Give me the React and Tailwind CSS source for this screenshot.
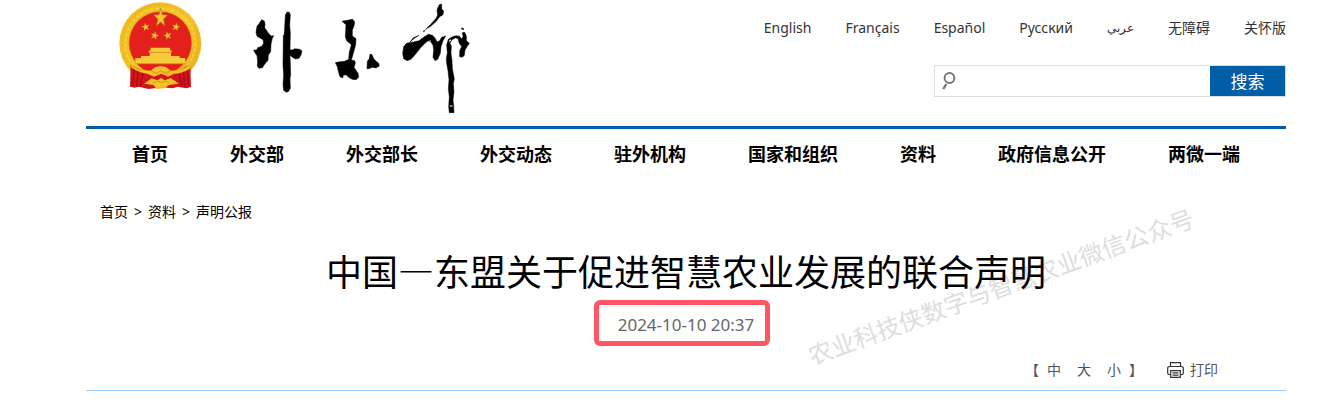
import React, { useState } from 'react';

const languages = ['English', 'Français', 'Español', 'Русский', 'عربي', '无障碍', '关怀版'];

const navItems = [
  '首页',
  '外交部',
  '外交部长',
  '外交动态',
  '驻外机构',
  '国家和组织',
  '资料',
  '政府信息公开',
  '两微一端',
];

const STAR = '0,-10 2.4,-3.2 9.5,-3.1 3.8,1.2 5.9,8.1 0,4 -5.9,8.1 -3.8,1.2 -9.5,-3.1 -2.4,-3.2';

function Emblem() {
  return (
    <svg viewBox="0 0 300 288" className="h-24 w-[100px] shrink-0" role="img" aria-label="国徽">
      <defs>
        <linearGradient id="gold" x1="0" y1="0" x2="1" y2="1">
          <stop offset="0" stopColor="#f0b81e" />
          <stop offset="0.5" stopColor="#f3c52c" />
          <stop offset="1" stopColor="#e9ad1c" />
        </linearGradient>
      </defs>
      {/* wheat ring */}
      <circle cx="151" cy="130" r="123" fill="url(#gold)" />
      <circle cx="151" cy="130" r="115" fill="none" stroke="#e6ac1e" strokeWidth="3" strokeDasharray="7 6" />
      <circle cx="151" cy="130" r="105" fill="none" stroke="#f8d64c" strokeWidth="4" strokeDasharray="9 7" />
      <circle cx="151" cy="129" r="95" fill="#c98a16" />
      <circle cx="151" cy="129" r="93" fill="#e3201b" />
      {/* stars */}
      <g fill="#f0c52e" stroke="#a8741a" strokeWidth="0.6">
        <polygon points={STAR} transform="translate(152 54) scale(2.2 3)" />
        <polygon points={STAR} transform="translate(107 81) rotate(-12) scale(1.3)" />
        <polygon points={STAR} transform="translate(198 81) rotate(12) scale(1.3)" />
        <polygon points={STAR} transform="translate(134 107) rotate(14) scale(1.3)" />
        <polygon points={STAR} transform="translate(173 107) rotate(-14) scale(1.3)" />
      </g>
      {/* gate */}
      <path
        fill="#f5cb3c"
        d="M122 143h58l1 9h7l-5 6v10h26v6h17v17H76v-17h17v-6h26v-10l-5-6h7z"
      />
      <path d="M119 157h64M76 191h150" stroke="#d99a19" strokeWidth="3" />
      {/* drapes */}
      <path
        fill="#d3141a"
        d="M62 193c16 14 42 20 62 21l28 8 28-8c22-1 44-8 61-21l2 68-14 4-27-5-14 5-34-3-38 5-30-7-12 3-14-3z"
      />
      <path
        d="M72 205l-4 54M84 211l-4 48M100 219l-10 40M232 205l3 54M220 211l4 48M207 219l9 40"
        stroke="#a60d14"
        strokeWidth="4"
      />
      <path
        fill="url(#gold)"
        d="M60 190c18 20 40 22 62 22l13-10 17-4 17 4 13 10c22 0 45-6 63-22l-5 16c-14 9-31 14-48 16l-18 8-20-9-22 9-20-9c-16-2-32-8-47-17z"
      />
      <path d="M122 212l18 8 13-8 13 8 16-8" fill="none" stroke="#d4951b" strokeWidth="3" />
      <path fill="url(#gold)" d="M102 251l23-16 18 6 10-8 11 8 18-7 25 17-31 4-11 10-25 2-10-12z" />
      <path d="M128 249l14-6 11 5 12-5 13 6" fill="none" stroke="#d99a19" strokeWidth="3" />
    </svg>
  );
}

// brush-written wordmark
function Wordmark() {
  return (
    <svg viewBox="0 0 750 360" className="h-[120px] w-[250px] shrink-0" role="img" aria-label="外交部">
      <g stroke="#000" strokeWidth="1.5" strokeLinejoin="round">
        <g transform="translate(15 15)">
          <path d="M50 44L58 48 60 58 59 68 70 84 78 93 86 92 82 100 78 118 77 140 70 150 69 166 60 176 52 188 42 190 37 184 38 170 36 152 28 140 26 136 36 134 38 128 50 124 56 114 54 104 36 94 33 82 36 64 42 56Z" />
          <path d="M126 21L133 22 136 30 134 60 136 85 135 134 142 135 150 131 164 133 171 138 168 150 162 160 152 162 142 157 135 150 137 210 135 220 136 250 131 259 124 262 116 256 114 240 116 210 114 180 115 92 118 86 121 30Z" />
        </g>
        <g transform="translate(270 30)">
          <path d="M36 34L56 30 68 28 74 36 72 48 67 60 67 78 78 86 77 104 70 130 64 150 74 152 76 160 72 172 84 190 86 202 78 209 66 208 54 200 48 194 40 196 38 204 30 200 26 188 22 170 16 158 24 156 44 154 56 148 58 126 64 104 50 92 46 80 48 44Z" />
          <path d="M120 132L126 134 132 148 146 160 148 168 138 174 128 172 116 176 111 176 112 154 118 146Z" />
        </g>
        <g transform="translate(465 0)">
          <path d="M133 14L140 12 140 26 146 34 144 44 134 50 124 64 108 78 92 88 108 72 124 54 128 44 126 32 128 24Z" />
          <path d="M91 91L86 95 85 93Z" />
          <path d="M72 106L56 116 44 128 54 114Z" />
          <path d="M26 140L34 130 56 126 72 122 88 110 100 103 112 106 120 114 126 126 134 122 140 112 152 108 144 122 138 140 136 160 128 178 120 182 114 172 116 150 114 136 108 126 100 122 90 130 76 144 62 162 48 178 36 182 26 176 23 160Z" />
          <path d="M155 134L160 118 172 110 184 107 194 109 200 117 204 110 202 98 209 97 214 108 214 122 223 130 216 140 210 150 208 166 202 172 194 170 194 152 200 140 192 128 190 117 182 113 171 119 165 130 169 138 168 160 171 182 172 205 178 238 175 250 177 275 174 300 176 318 177 338 163 338 161 320 163 290 160 268 162 240 159 212 155 190 154 175 157 158Z" />
          <path d="M199 84L205 85 206 89 201 88Z" />
        </g>
      </g>
      <path fill="#fff" d="M558 129l5-4 2 3-5 4zM567 123l6-2-3 6zM629 317l8-1 1 3-8 1zM626 124l5-6 3 2-5 6z" />
    </svg>
  );
}

function PrinterIcon() {
  return (
    <svg viewBox="0 0 17 16" className="h-4 w-[17px]" fill="none" stroke="#333" strokeWidth="1.2" aria-hidden="true">
      <path d="M3.5 4.5V.7h10v3.8" />
      <path d="M3.5 12.5H2.2A1.5 1.5 0 0 1 .7 11V6.2a1.7 1.7 0 0 1 1.7-1.7h12.2a1.7 1.7 0 0 1 1.7 1.7V11a1.5 1.5 0 0 1-1.5 1.5h-1.3" />
      <path d="M3.7 8.6h9.6v6.7H3.7zM5.5 10.9h6M5.5 13.1h6" />
    </svg>
  );
}

export default function App() {
  const [keyword, setKeyword] = useState('');

  return (
    <div
      lang="zh-CN"
      className="bg-white pb-6 pl-[86px] pr-[47px] font-['Noto_Sans','Noto_Sans_CJK_SC',sans-serif] text-black"
    >
      <header className="flex h-[126px] items-start justify-between">
        <a href="#" className="flex gap-[30px] pl-6">
          <Emblem />
          <Wordmark />
        </a>

        <div className="flex flex-col items-end gap-[27px] pt-[18px]">
          <ul className="flex gap-[34px] text-sm text-[#333]">
            {languages.map((item) => (
              <li key={item} className={item === 'عربي' ? 'text-xs leading-5' : ''}>
                <a href="#">{item}</a>
              </li>
            ))}
          </ul>

          <form className="flex h-8 w-[352px] border border-[#ddd]" onSubmit={(e) => e.preventDefault()}>
            <label htmlFor="keyword" className="flex items-center pl-[7px]">
              <svg viewBox="0 0 14 18" className="h-[18px] w-3.5" fill="none" stroke="#777" role="img" aria-label="搜索">
                <circle cx="7.5" cy="6" r="4.9" strokeWidth="2" />
                <path d="M4.3 12L1.3 17" strokeWidth="2.4" />
              </svg>
            </label>
            <input
              id="keyword"
              type="text"
              value={keyword}
              onChange={(e) => setKeyword(e.target.value)}
              className="min-w-0 flex-1 px-2 text-sm outline-none"
            />
            <button type="submit" className="w-[75px] bg-[#005ea7] text-[17px] leading-none text-white">
              搜索
            </button>
          </form>
        </div>
      </header>

      <nav className="border-t-[3px] border-[#005ea7]">
        <ul className="flex h-[50px] items-center justify-between px-[46px] text-lg font-bold">
          {navItems.map((item) => (
            <li key={item}>
              <a href="#">{item}</a>
            </li>
          ))}
        </ul>
      </nav>

      <div className="flex gap-1.5 pl-[14px] pt-[23px] text-sm">
        <a href="#">首页</a>
        <span>&gt;</span>
        <a href="#">资料</a>
        <span>&gt;</span>
        <a href="#">声明公报</a>
      </div>

      <article className="relative isolate border-b border-[#99ccf8] pt-[22px]">
        <p className="absolute right-[81px] top-[49px] -z-10 -rotate-20 whitespace-nowrap text-2xl text-[#ddd]">
          农业科技侠数字与智慧农业微信公众号
        </p>

        <h1 className="pb-1 text-center font-['Noto_Sans_CJK_SC',sans-serif] text-4xl leading-[52px]">
          中国—东盟关于促进智慧农业发展的联合声明
        </h1>

        <div className="flex justify-center pr-2">
          <time
            dateTime="2024-10-10T20:37"
            className="flex h-[46px] w-44 items-center justify-center rounded-md border-[5px] border-[#ff5565] pl-2 pt-1 text-[17px] text-[#666]"
          >
            2024-10-10 20:37
          </time>
        </div>

        <div className="flex items-center justify-end gap-6 pb-2.5 pr-[68px] pt-[14px] text-sm text-[#555]">
          <div className="flex gap-2">
            <span>【</span>
            <div className="flex gap-4">
              <button type="button">中</button>
              <button type="button">大</button>
              <button type="button">小</button>
            </div>
            <span>】</span>
          </div>
          <button type="button" className="flex items-center gap-1.5">
            <PrinterIcon />
            打印
          </button>
        </div>
      </article>
    </div>
  );
}
